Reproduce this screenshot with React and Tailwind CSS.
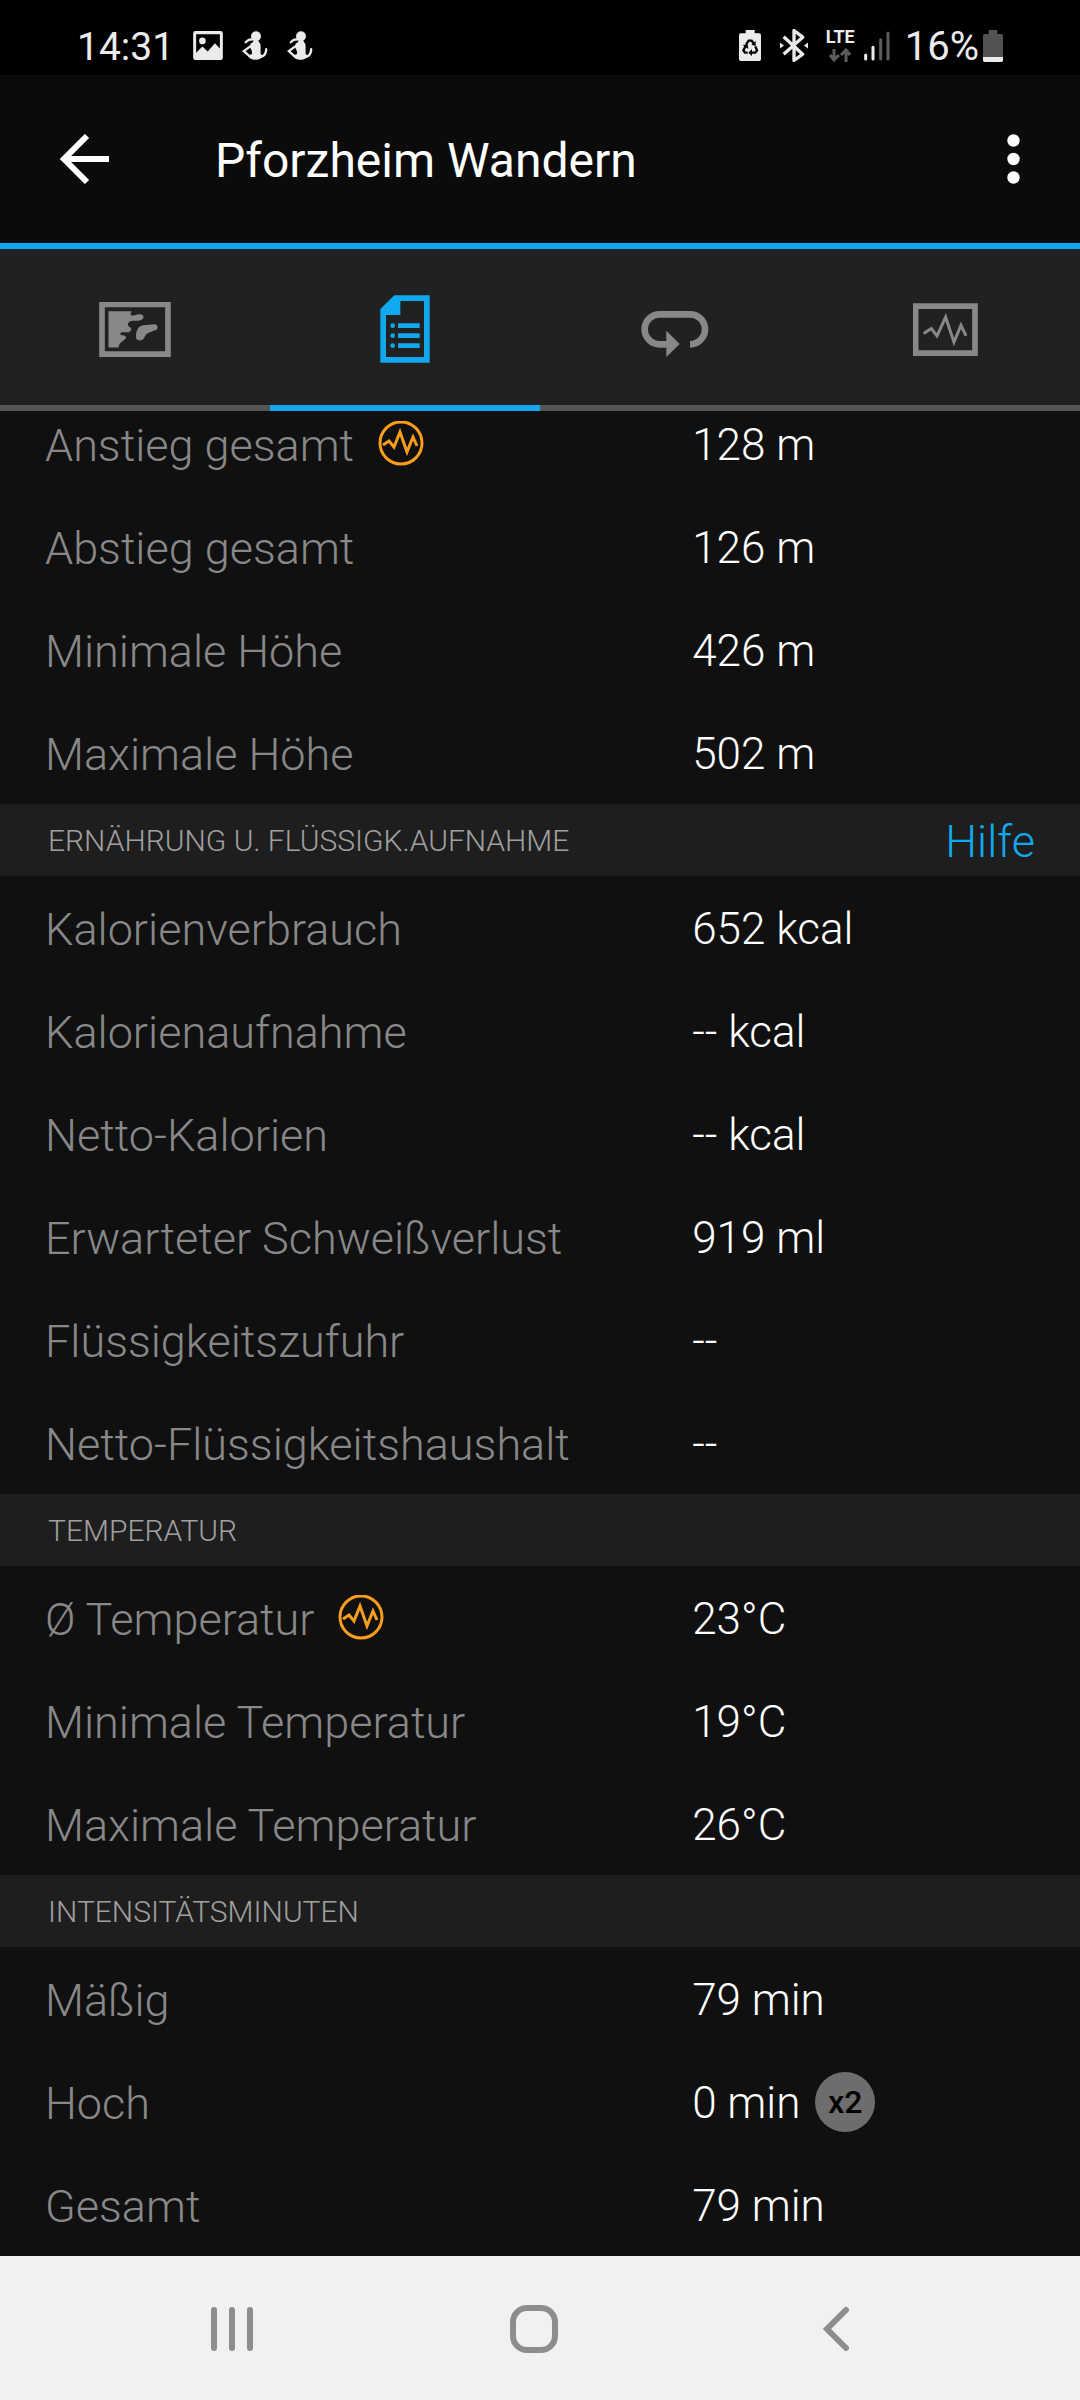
const sections = [
  {
    rows: [
      { label: 'Anstieg gesamt', value: '128 m', chart: true },
      { label: 'Abstieg gesamt', value: '126 m' },
      { label: 'Minimale Höhe', value: '426 m' },
      { label: 'Maximale Höhe', value: '502 m' },
    ],
  },
  {
    title: 'ERNÄHRUNG U. FLÜSSIGK.AUFNAHME',
    help: true,
    rows: [
      { label: 'Kalorienverbrauch', value: '652 kcal' },
      { label: 'Kalorienaufnahme', value: '-- kcal' },
      { label: 'Netto-Kalorien', value: '-- kcal' },
      { label: 'Erwarteter Schweißverlust', value: '919 ml' },
      { label: 'Flüssigkeitszufuhr', value: '--' },
      { label: 'Netto-Flüssigkeitshaushalt', value: '--' },
    ],
  },
  {
    title: 'TEMPERATUR',
    rows: [
      { label: 'Ø Temperatur', value: '23°C', chart: true },
      { label: 'Minimale Temperatur', value: '19°C' },
      { label: 'Maximale Temperatur', value: '26°C' },
    ],
  },
  {
    title: 'INTENSITÄTSMINUTEN',
    rows: [
      { label: 'Mäßig', value: '79 min' },
      { label: 'Hoch', value: '0 min', badge: 'x2' },
      { label: 'Gesamt', value: '79 min' },
    ],
  },
];

const tabs = [
  { id: 'map', label: 'Karte', Icon: MapIcon },
  { id: 'stats', label: 'Statistik', Icon: DocIcon },
  { id: 'laps', label: 'Runden', Icon: LapsIcon },
  { id: 'charts', label: 'Diagramme', Icon: ChartIcon },
];

function MapIcon() {
  return (
    <svg width="72" height="55" viewBox="117 95 216 166" fill="currentColor" aria-hidden="true">
      <path fillRule="evenodd" d="M117 95h216v166H117zM134 111v133h182V111z" />
      <path d="M145 123h70c-4 6-5 12 2 13 8 0 14-5 22-4 16 1 15 15 2 18-10 3-18 1-27 2-9 2-14 11-8 16 9 5 9 11 5 15-7 7-22 1-29 5-4 5 1 8 9 8 9 2 9 8 2 13-10 7-16 12-18 23h-30z" />
      <path d="M228 195c1-14 7-28 21-30 13-2 25-1 34-3 10-1 14 12 6 17-13 6-28 8-33 18-4 8-6 14-17 14-9-1-12-7-11-16z" />
    </svg>
  );
}

function DocIcon() {
  return (
    <svg width="50" height="68" viewBox="958 76 150 204" fill="currentColor" aria-hidden="true">
      <path fillRule="evenodd" d="M1001 77h106v202H959V118zM1019 94v42h-43v126h114V94z" />
      <circle cx="996" cy="168" r="7" />
      <circle cx="996" cy="198" r="7" />
      <circle cx="996" cy="228" r="7" />
      <path d="M1012 161h65v14h-65zM1012 191h65v14h-65zM1012 221h65v14h-65z" />
    </svg>
  );
}

function LapsIcon() {
  return (
    <svg width="68" height="56" viewBox="122 96 204 168" fill="none" aria-hidden="true">
      <path d="M202 226h-24a45 45 0 0 1 0-90h91a45 45 0 0 1 0 90" stroke="currentColor" strokeWidth="20" />
      <path d="M198 185v79l40-39z" fill="currentColor" />
    </svg>
  );
}

function ChartIcon() {
  return (
    <svg width="65" height="53" viewBox="936 98 195 158" fill="none" stroke="currentColor" aria-hidden="true">
      <path d="M944 107h178v141H944z" strokeWidth="17" />
      <path d="M968 189l23-15 17 22 26-56 25 75 21-51 15 32" strokeWidth="9" />
    </svg>
  );
}

function PulseBadge() {
  return (
    <svg width="46" height="46" viewBox="0 0 46 46" fill="none" stroke="#f99d1c" aria-hidden="true">
      <circle cx="23" cy="22" r="21" strokeWidth="3" />
      <path d="M5 24l6-4 5 6 6-15 7 20 6-15 4 9" strokeWidth="3" />
    </svg>
  );
}

function PictureIcon() {
  return (
    <svg width="30" height="29" viewBox="396 63 90 88" fill="#ebebeb" aria-hidden="true">
      <path
        fillRule="evenodd"
        d="M403 63h76q7 0 7 7v74q0 7-7 7h-76q-7 0-7-7V70q0-7 7-7zM405 73v56l19-19 16 15 22-25 15 16V73z"
      />
      <circle cx="424" cy="93" r="10" />
    </svg>
  );
}

function FigureIcon() {
  return (
    <svg width="26" height="29" viewBox="541 64 78 88" fill="#ebebeb" aria-hidden="true">
      <circle cx="583" cy="80" r="15" />
      <path d="M575 92h15c0 6 7 8 7 16v26l8 6c-6 8-12 11-22 11-14 0-20-4-24-13l12-4c1-8-2-14-6-20l2-12c4-2 8-4 8-10z" />
      <g fill="none" stroke="#ebebeb" strokeWidth="7" strokeLinecap="round">
        <path d="M572 106l-26 19 18 16" />
        <path d="M552 98l9-7 12-2" />
        <path d="M600 142c9-4 14-12 14-23" />
      </g>
    </svg>
  );
}

function BatterySaverIcon() {
  return (
    <svg width="22" height="31" viewBox="54 59 66 93" aria-hidden="true">
      <path d="M74 59h27v10h14q5 0 5 5v73q0 5-5 5H59q-5 0-5-5V74q0-5 5-5h15z" fill="#ebebeb" />
      <g fill="none" stroke="#000" strokeWidth="7">
        <path d="M75 103l8-12h9l7 10M103 108l5 12-5 7H90M80 127h-8l-5-7 7-13" />
      </g>
      <path d="M104 92v15l-13-4zM93 116v21l-11-10zM65 104l15-2 2 14z" fill="#000" />
    </svg>
  );
}

function BluetoothIcon() {
  return (
    <svg width="28" height="33" viewBox="177 56 84 98" fill="none" stroke="#ebebeb" aria-hidden="true">
      <path d="M188 79l57 52-26 19V60l26 20-57 51" strokeWidth="10" strokeLinejoin="round" />
      <path d="M177 96l12 9-12 9zM261 96l-12 9 12 9z" fill="#ebebeb" stroke="none" />
    </svg>
  );
}

function SignalIcon() {
  return (
    <svg width="28" height="30" viewBox="431 63 84 90" strokeWidth="9" strokeLinecap="round" aria-hidden="true">
      <path d="M439 135v12M461 112v35" stroke="#ebebeb" />
      <path d="M484 89v58M506 69v78" stroke="#5c5c5c" />
    </svg>
  );
}

function BatteryIcon() {
  return (
    <svg width="20" height="32" viewBox="789 57 60 96" aria-hidden="true">
      <path d="M806 57h26v12h12q5 0 5 5v65h-60V74q0-5 5-5h12z" fill="#525252" />
      <path d="M789 138h60v10q0 5-5 5h-50q-5 0-5-5z" fill="#ebebeb" />
    </svg>
  );
}

function StatusBar() {
  return (
    <div className="flex h-[75px] items-center justify-between bg-black pt-4 pr-[77px] pl-[77px] text-[#ebebeb]">
      <div className="flex items-center gap-[19px]">
        <span className="pt-0.5 text-[39px] leading-10">14:31</span>
        <PictureIcon />
        <FigureIcon />
        <FigureIcon />
      </div>
      <div className="flex items-center">
        <BatterySaverIcon />
        <span className="mr-[18px] ml-[19px]">
          <BluetoothIcon />
        </span>
        <span className="mr-2 flex flex-col items-center gap-1">
          <span className="text-[18px] leading-[14px] font-bold">LTE</span>
          <svg width="22" height="14" viewBox="0 0 22 14" fill="none" stroke="#5c5c5c" strokeWidth="3" aria-hidden="true">
            <path d="M5 1v11M1 7l4 5 5-5M17 14V2M12 7l5-5 4 5" />
          </svg>
        </span>
        <SignalIcon />
        <span className="mr-1 ml-[14px] pt-0.5 text-[40px] leading-10">16%</span>
        <BatteryIcon />
      </div>
    </div>
  );
}

function Header() {
  return (
    <header className="flex h-[174px] items-center border-b-[6px] border-[#11a9ed] bg-[#0b0b0b] pr-[60px] pl-[60px]">
      <button aria-label="Zurück">
        <svg width="50" height="50" viewBox="0 0 50 50" fill="none" stroke="#fff" strokeWidth="6" aria-hidden="true">
          <path d="M49 25H5M27 2L4 25l23 23" />
        </svg>
      </button>
      <h1 className="flex-1 pt-1 pl-[105px] text-[48px] leading-[56px] text-white">Pforzheim Wandern</h1>
      <button aria-label="Weitere Optionen">
        <svg width="13" height="50" viewBox="0 0 13 50" fill="#fff" aria-hidden="true">
          <circle cx="6.5" cy="6.5" r="6.2" />
          <circle cx="6.5" cy="25" r="6.2" />
          <circle cx="6.5" cy="43.5" r="6.2" />
        </svg>
      </button>
    </header>
  );
}

function TabBar({ active }) {
  return (
    <nav className="relative z-10 flex bg-[#212121]">
      {tabs.map(({ id, label, Icon }) => (
        <button
          key={id}
          aria-label={label}
          className={
            'flex h-[162px] flex-1 items-center justify-center border-b-[6px] pt-1 ' +
            (id === active ? 'border-[#11a9ed] text-[#11a9ed]' : 'border-[#555555] text-[#888888]')
          }
        >
          <Icon />
        </button>
      ))}
    </nav>
  );
}

function Row({ label, value, chart, badge }) {
  return (
    <div className="grid h-[103px] grid-cols-[64%_1fr] items-center font-light">
      <dt className="flex items-center gap-6 pl-[45px] text-[45px] leading-[52px] text-[#888888]">
        <span className="pt-1">{label}</span>
        {chart && <PulseBadge />}
      </dt>
      <dd className="flex items-center gap-[15px] pl-px text-[44px] leading-[52px] text-white">
        <span className="pt-0.5">{value}</span>
        {badge && (
          <span className="grid size-[60px] place-items-center rounded-full bg-[#6d6d6d] text-[32px] leading-8 font-medium text-black">
            {badge}
          </span>
        )}
      </dd>
    </div>
  );
}

function Section({ title, help, rows }) {
  return (
    <section>
      {title && (
        <div className="flex h-[72px] items-center justify-between bg-[#1e1e1e] pr-[45px] pl-12 font-light">
          <h2 className="pt-0.5 text-[30px] leading-9 text-[#a0a0a0]">{title}</h2>
          {help && (
            <a href="#hilfe" className="pt-1 text-[45px] leading-[52px] text-[#11a9ed]">
              Hilfe
            </a>
          )}
        </div>
      )}
      <dl>
        {rows.map((r) => (
          <Row key={r.label} {...r} />
        ))}
      </dl>
    </section>
  );
}

function NavBar() {
  return (
    <nav className="flex h-36 items-center bg-[#f1f1f1] pt-0.5 pr-[93px] pl-[81px]">
      <button aria-label="Letzte Apps" className="flex flex-1 justify-center">
        <svg width="42" height="46" viewBox="0 0 42 46" stroke="#8d8d8d" strokeWidth="6" strokeLinecap="round" aria-hidden="true">
          <path d="M3 4v38M21 4v38M39 4v38" />
        </svg>
      </button>
      <button aria-label="Startseite" className="flex flex-1 justify-center">
        <span className="size-12 rounded-[17px] border-[6px] border-[#8d8d8d]" />
      </button>
      <button aria-label="Zurück" className="flex flex-1 justify-center">
        <svg width="28" height="46" viewBox="0 0 28 46" fill="none" stroke="#8d8d8d" strokeWidth="6" strokeLinecap="round" aria-hidden="true">
          <path d="M24 4L5 23l19 19" />
        </svg>
      </button>
    </nav>
  );
}

export default function App() {
  return (
    <div className="bg-[#101010] font-['Roboto',sans-serif]">
      <StatusBar />
      <Header />
      <TabBar active="stats" />
      {/* list is scrolled a little way under the tab bar */}
      <main className="-mt-[19px]">
        {sections.map((s, i) => (
          <Section key={i} {...s} />
        ))}
      </main>
      <NavBar />
    </div>
  );
}
